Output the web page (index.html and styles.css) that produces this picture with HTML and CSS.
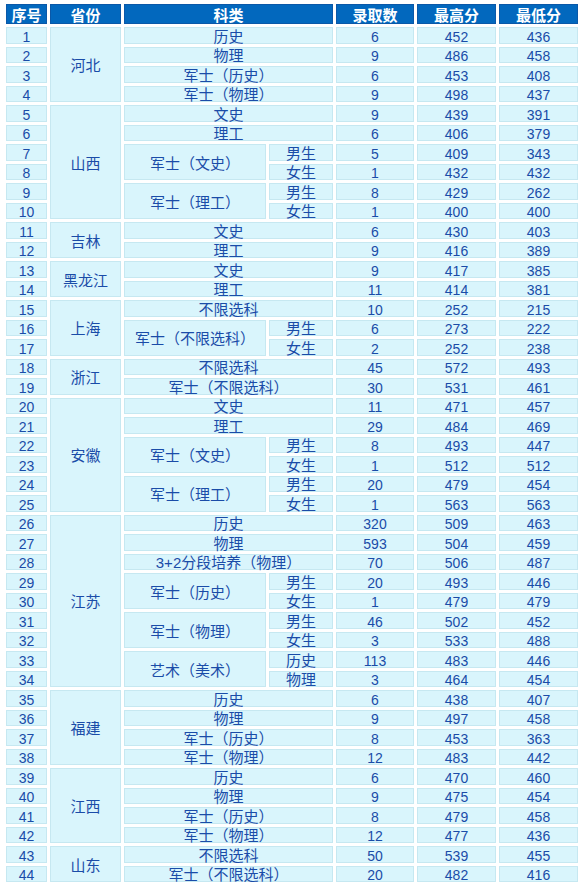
FILE: index.html
```html
<!DOCTYPE html>
<html lang="zh-CN">
<head>
<meta charset="utf-8">
<title>录取分数</title>
<link rel="stylesheet" href="styles.css">
</head>
<body>
<table class="score">
<colgroup>
<col class="c-no"><col class="c-prov"><col class="c-kind"><col class="c-sub"><col class="c-num"><col class="c-max"><col class="c-min">
</colgroup>
<thead>
<tr><th>序号</th><th>省份</th><th colspan="2">科类</th><th>录取数</th><th>最高分</th><th>最低分</th></tr>
</thead>
<tbody>
<tr><td>1</td><td class="t" rowspan="4">河北</td><td class="t" colspan="2">历史</td><td>6</td><td>452</td><td>436</td></tr>
<tr><td>2</td><td class="t" colspan="2">物理</td><td>9</td><td>486</td><td>458</td></tr>
<tr><td>3</td><td class="t" colspan="2">军士（历史）</td><td>6</td><td>453</td><td>408</td></tr>
<tr><td>4</td><td class="t" colspan="2">军士（物理）</td><td>9</td><td>498</td><td>437</td></tr>
<tr><td>5</td><td class="t" rowspan="6">山西</td><td class="t" colspan="2">文史</td><td>9</td><td>439</td><td>391</td></tr>
<tr><td>6</td><td class="t" colspan="2">理工</td><td>6</td><td>406</td><td>379</td></tr>
<tr><td>7</td><td class="t" rowspan="2">军士（文史）</td><td class="t">男生</td><td>5</td><td>409</td><td>343</td></tr>
<tr><td>8</td><td class="t">女生</td><td>1</td><td>432</td><td>432</td></tr>
<tr><td>9</td><td class="t" rowspan="2">军士（理工）</td><td class="t">男生</td><td>8</td><td>429</td><td>262</td></tr>
<tr><td>10</td><td class="t">女生</td><td>1</td><td>400</td><td>400</td></tr>
<tr><td>11</td><td class="t" rowspan="2">吉林</td><td class="t" colspan="2">文史</td><td>6</td><td>430</td><td>403</td></tr>
<tr><td>12</td><td class="t" colspan="2">理工</td><td>9</td><td>416</td><td>389</td></tr>
<tr><td>13</td><td class="t" rowspan="2">黑龙江</td><td class="t" colspan="2">文史</td><td>9</td><td>417</td><td>385</td></tr>
<tr><td>14</td><td class="t" colspan="2">理工</td><td>11</td><td>414</td><td>381</td></tr>
<tr><td>15</td><td class="t" rowspan="3">上海</td><td class="t" colspan="2">不限选科</td><td>10</td><td>252</td><td>215</td></tr>
<tr><td>16</td><td class="t" rowspan="2">军士（不限选科）</td><td class="t">男生</td><td>6</td><td>273</td><td>222</td></tr>
<tr><td>17</td><td class="t">女生</td><td>2</td><td>252</td><td>238</td></tr>
<tr><td>18</td><td class="t" rowspan="2">浙江</td><td class="t" colspan="2">不限选科</td><td>45</td><td>572</td><td>493</td></tr>
<tr><td>19</td><td class="t" colspan="2">军士（不限选科）</td><td>30</td><td>531</td><td>461</td></tr>
<tr><td>20</td><td class="t" rowspan="6">安徽</td><td class="t" colspan="2">文史</td><td>11</td><td>471</td><td>457</td></tr>
<tr><td>21</td><td class="t" colspan="2">理工</td><td>29</td><td>484</td><td>469</td></tr>
<tr><td>22</td><td class="t" rowspan="2">军士（文史）</td><td class="t">男生</td><td>8</td><td>493</td><td>447</td></tr>
<tr><td>23</td><td class="t">女生</td><td>1</td><td>512</td><td>512</td></tr>
<tr><td>24</td><td class="t" rowspan="2">军士（理工）</td><td class="t">男生</td><td>20</td><td>479</td><td>454</td></tr>
<tr><td>25</td><td class="t">女生</td><td>1</td><td>563</td><td>563</td></tr>
<tr><td>26</td><td class="t" rowspan="9">江苏</td><td class="t" colspan="2">历史</td><td>320</td><td>509</td><td>463</td></tr>
<tr><td>27</td><td class="t" colspan="2">物理</td><td>593</td><td>504</td><td>459</td></tr>
<tr><td>28</td><td class="t" colspan="2">3+2分段培养（物理）</td><td>70</td><td>506</td><td>487</td></tr>
<tr><td>29</td><td class="t" rowspan="2">军士（历史）</td><td class="t">男生</td><td>20</td><td>493</td><td>446</td></tr>
<tr><td>30</td><td class="t">女生</td><td>1</td><td>479</td><td>479</td></tr>
<tr><td>31</td><td class="t" rowspan="2">军士（物理）</td><td class="t">男生</td><td>46</td><td>502</td><td>452</td></tr>
<tr><td>32</td><td class="t">女生</td><td>3</td><td>533</td><td>488</td></tr>
<tr><td>33</td><td class="t" rowspan="2">艺术（美术）</td><td class="t">历史</td><td>113</td><td>483</td><td>446</td></tr>
<tr><td>34</td><td class="t">物理</td><td>3</td><td>464</td><td>454</td></tr>
<tr><td>35</td><td class="t" rowspan="4">福建</td><td class="t" colspan="2">历史</td><td>6</td><td>438</td><td>407</td></tr>
<tr><td>36</td><td class="t" colspan="2">物理</td><td>9</td><td>497</td><td>458</td></tr>
<tr><td>37</td><td class="t" colspan="2">军士（历史）</td><td>8</td><td>453</td><td>363</td></tr>
<tr><td>38</td><td class="t" colspan="2">军士（物理）</td><td>12</td><td>483</td><td>442</td></tr>
<tr><td>39</td><td class="t" rowspan="4">江西</td><td class="t" colspan="2">历史</td><td>6</td><td>470</td><td>460</td></tr>
<tr><td>40</td><td class="t" colspan="2">物理</td><td>9</td><td>475</td><td>454</td></tr>
<tr><td>41</td><td class="t" colspan="2">军士（历史）</td><td>8</td><td>479</td><td>458</td></tr>
<tr><td>42</td><td class="t" colspan="2">军士（物理）</td><td>12</td><td>477</td><td>436</td></tr>
<tr><td>43</td><td class="t" rowspan="2">山东</td><td class="t" colspan="2">不限选科</td><td>50</td><td>539</td><td>455</td></tr>
<tr><td>44</td><td class="t" colspan="2">军士（不限选科）</td><td>20</td><td>482</td><td>416</td></tr>
</tbody>
</table>
</body>
</html>
```

FILE: styles.css
```css
html, body {
  margin: 0;
  padding: 0;
  background: #ffffff;
}

.score {
  margin: 1px 0 0 3px;
  width: 578px;
  table-layout: fixed;
  border-collapse: separate;
  border-spacing: 3px;
  font-family: "Liberation Sans", "Noto Sans CJK SC", sans-serif;
  font-size: 14px;
}

.c-no { width: 41px; }
.c-prov { width: 71px; }
.c-kind { width: 142px; }
.c-sub { width: 64px; }
.c-num { width: 78px; }
.c-max { width: 79px; }
.c-min { width: 79px; }

.score th,
.score td {
  box-sizing: border-box;
  text-align: center;
  vertical-align: middle;
  white-space: nowrap;
}

.score th {
  height: 20px;
  padding: 3px 0 0 0;
  line-height: 15px;
  background: #0268be;
  border: 1px solid #0a58a8;
  color: #ffffff;
  font-weight: bold;
  font-size: 15px;
}

.score td {
  height: 16.5px;
  padding: 3.5px 0 0 0;
  line-height: 11px;
  background: #d9f5fc;
  border: 1px solid #c6e8f1;
  color: #1a4ca8;
}

.score td.t {
  font-size: 15px;
  padding-top: 2px;
}
```
